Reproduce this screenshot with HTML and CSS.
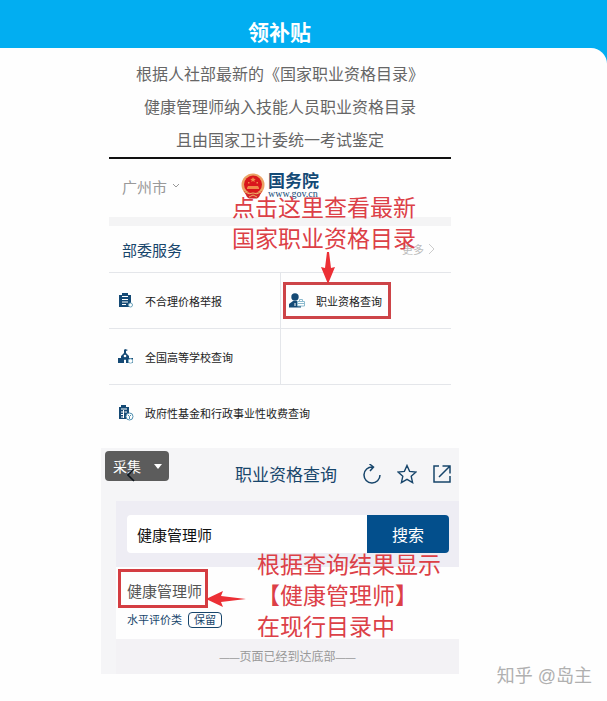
FILE: index.html
```html
<!DOCTYPE html>
<html lang="zh-CN">
<head>
    <meta charset="UTF-8">
    <meta name="viewport" content="width=device-width, initial-scale=1.0">
    <title>领补贴</title>
    <link rel="stylesheet" href="styles.css">
</head>
<body>
    <header class="banner">
        <h1>领补贴</h1>
    </header>

    <main class="panel">
        <div class="intro">
            <p>根据人社部最新的《国家职业资格目录》</p>
            <p>健康管理师纳入技能人员职业资格目录</p>
            <p>且由国家卫计委统一考试鉴定</p>
        </div>

        <!-- Service list -->
        <section class="services">
            <div class="services-top">
                <button class="city" type="button">广州市
                    <svg width="8" height="6" viewBox="0 0 8 6"><path d="M1 1l3 3 3-3" fill="none" stroke="#999" stroke-width="1"/></svg>
                </button>
                <a class="gov" href="#">
                    <svg width="24" height="26" viewBox="0 0 24 26">
                        <circle cx="12" cy="12" r="11.5" fill="#eba365"/>
                        <circle cx="12" cy="11.5" r="9" fill="#d9161c"/>
                        <path d="M12 4l.8 1.8 2 .1-1.5 1.3.5 1.9-1.8-1-1.8 1 .5-1.9L9.200 5.900l2-.1zM7 9h1.500v1.500H7zM15.500 9H17v1.500h-1.500zM6 15l1-2h10l1 2v1H6z" fill="#f08a4a"/>
                        <path d="M3 18q4 3 9 1 5 2 9-1l-3 6-2 1.500H8L6 24z" fill="#d3252a"/>
                        <path d="M4 19q4 3 8 1 4 2 8-1M8 24l4-2 4 2" fill="none" stroke="#efae64" stroke-width="1"/>
                    </svg>
                    <span class="gov-text">
                        <strong>国务院</strong>
                        <small>www.gov.cn</small>
                    </span>
                </a>
            </div>
            <div class="services-title">
                <h2>部委服务</h2>
                <a class="more" href="#">更多
                    <svg width="8" height="12" viewBox="0 0 8 12"><path d="M1 1l5 5-5 5" fill="none" stroke="#ccc"/></svg>
                </a>
            </div>
            <div class="grid">
                <a class="item" href="#">
                    <svg width="16" height="16" viewBox="0 0 16 16">
                        <path d="M1 2h3V0h6v2h3v8l-2 4H1z" fill="#154a75"/>
                        <path d="M4 3.500h6M4 6.500h6M4 9h6M4 11.500h4" stroke="#fff" stroke-width="1"/>
                        <circle cx="12.500" cy="12" r="2" fill="#fff" stroke="#6da5bd"/>
                    </svg>
                    不合理价格举报
                </a>
                <div class="cell">
                    <a class="item marked" href="#">
                        <svg width="16" height="16" viewBox="0 0 16 16">
                            <circle cx="6" cy="4" r="3.700" fill="#154a75"/>
                            <path d="M0 14.500V11l4-3h4l4 3v3.500z" fill="#154a75"/>
                            <path d="M6 10v3" stroke="#fff"/>
                            <path d="M10.500 8V6.500h3V8M8.500 8.500h7v4.500h-7zM8.500 10.500h7" fill="#fff" stroke="#8bbace"/>
                        </svg>
                        职业资格查询
                    </a>
                </div>
                <a class="item" href="#">
                    <svg width="16" height="16" viewBox="0 0 16 16">
                        <path d="M7 0l3 1-2 1v2l3 3v2h4v5H0V9h3V7l3-3V1z" fill="#154a75"/>
                        <circle cx="7" cy="7" r="1.300" fill="#fff"/>
                        <path d="M6.500 14v-3h1v3z" fill="#fff" stroke="#fff"/>
                        <circle cx="12.500" cy="12" r="2.200" fill="#fff" stroke="#8bbace"/>
                    </svg>
                    全国高等学校查询
                </a>
                <div class="cell"></div>
                <a class="item wide" href="#">
                    <svg width="16" height="16" viewBox="0 0 16 16">
                        <path d="M1 2h2V0h5v2h3v12H1z" fill="#154a75"/>
                        <path d="M3 4h6M3 7h2M6.500 7H9M3 9.500h2M3 12h3M5.500 5v8" stroke="#fff" stroke-width="1"/>
                        <circle cx="11.500" cy="11.500" r="3.500" fill="#fff" stroke="#4f8fb0"/>
                        <path d="M10 10l1.500 1.500L13 10M11.500 11.500V14" fill="none" stroke="#4f8fb0"/>
                    </svg>
                    政府性基金和行政事业性收费查询
                </a>
            </div>
            <div class="note note-top">点击这里查看最新<br>国家职业资格目录</div>
            <svg class="arrow-down" width="14" height="32" viewBox="0 0 14 32"><path d="M6 0h2l2 16 4-1-7 17-7-17 4 1z" fill="#ec2f35"/></svg>
        </section>

        <!-- Search result -->
        <section class="search">
            <div class="search-top">
                <h2>职业资格查询</h2>
                <button class="tool" type="button" aria-label="刷新">
                    <svg width="20" height="20" viewBox="0 0 20 20"><path d="M10.500 3A8 8 0 1 0 18 11M7.500 0l4 3-3.500 4" fill="none" stroke="#17456b" stroke-width="1.500"/></svg>
                </button>
                <button class="tool" type="button" aria-label="收藏">
                    <svg width="20" height="20" viewBox="0 0 20 20"><path d="M10 1.500l2.600 5.900 6.400.6-4.800 4.300 1.400 6.300L10 15.300l-5.600 3.300 1.400-6.300L1 8l6.400-.6z" fill="none" stroke="#17456b" stroke-width="1.400"/></svg>
                </button>
                <button class="tool" type="button" aria-label="分享">
                    <svg width="20" height="20" viewBox="0 0 20 20"><path d="M7 2H2v16h16v-6M10.500 2H18v7.500M18 2L7 13" fill="none" stroke="#17456b" stroke-width="1.500"/></svg>
                </button>
            </div>
            <div class="search-body">
                <form class="search-form">
                    <input type="text" value="健康管理师" aria-label="职业资格">
                    <button type="button">搜索</button>
                </form>
                <div class="result">
                    <a class="result-name" href="#">健康管理师</a>
                    <div class="result-info">水平评价类 <span class="badge">保留</span></div>
                </div>
                <p class="end"><span class="dash">——</span>页面已经到达底部<span class="dash">——</span></p>
            </div>
            <button class="collect" type="button">采集
                <svg width="8" height="5" viewBox="0 0 8 5"><path d="M0 0h8L4 5z" fill="#fff"/></svg>
            </button>
            <svg class="back" width="8" height="14" viewBox="0 0 8 14"><path d="M7 1L1 7l6 6" fill="none" stroke="#10181f" stroke-width="1.600"/></svg>
            <div class="note note-bottom">根据查询结果显示<br>【健康管理师】<br>在现行目录中</div>
            <svg class="arrow-left" width="40" height="16" viewBox="0 0 40 16"><path d="M0 8l17-8-2 5 25 3-25 3 2 5z" fill="#ec2f35"/></svg>
        </section>

        <div class="watermark">知乎 @岛主</div>
    </main>
</body>
</html>
```
FILE: styles.css
```css
* {
    box-sizing: border-box;
}
body {
    margin: 0;
    background: #02aef1;
    font-family: "Liberation Sans", "Noto Sans CJK SC", sans-serif;
    color: #222;
}
h1, h2, p {
    margin: 0;
    font-weight: normal;
}
a {
    color: inherit;
    text-decoration: none;
}
button {
    border: none;
    padding: 0;
    background: none;
    font-family: inherit;
    color: inherit;
    cursor: pointer;
}
svg {
    display: block;
    flex: none;
}
.banner {
    height: 48px;
    padding: 18px 48px 0 0;
    text-align: center;
    color: #fff;
}
.banner h1 {
    font-size: 21px;
    line-height: 30px;
    font-weight: bold;
}
.panel {
    position: relative;
    min-height: calc(100vh - 48px);
    padding: 10px 47px 28px 0;
    background: #fefefe;
    border-top-right-radius: 16px;
}
.intro {
    text-align: center;
    font-size: 16px;
    line-height: 33px;
    color: #666;
}

/* services */
.services {
    position: relative;
    max-width: 342px;
    margin: 0 auto 8px;
    border-top: 2px solid #111;
}
.services-top {
    display: grid;
    grid-template-columns: 1fr auto 1fr;
    align-items: center;
    height: 67px;
    padding: 0 13px 4px;
    border-bottom: 9px solid #f4f4f5;
}
.city {
    display: flex;
    align-items: center;
    gap: 5px;
    font-size: 15px;
    color: #999;
}
.gov {
    display: flex;
    align-items: center;
    gap: 3px;
    color: #144a76;
}
.gov-text strong,
.gov-text small {
    display: block;
}
.gov-text strong {
    font-size: 17px;
    line-height: 16px;
}
.gov-text small {
    font-family: "Liberation Serif", serif;
    font-size: 10px;
    line-height: 8px;
}
.services-title {
    display: flex;
    align-items: center;
    justify-content: space-between;
    height: 46px;
    padding: 0 15px 0 13px;
}
.services-title h2 {
    font-size: 15px;
    color: #17456b;
}
.more {
    display: flex;
    align-items: center;
    gap: 4px;
    font-size: 11px;
    color: #bbb;
}
.grid {
    display: grid;
    grid-template-columns: 1fr 1fr;
}
.item,
.cell {
    display: flex;
    align-items: center;
    height: 56px;
    border-top: 1px solid #e4e6ea;
}
.cell {
    border-left: 1px solid #e4e6ea;
}
.item {
    gap: 11px;
    padding-left: 9px;
    font-size: 11px;
}
.wide {
    grid-column: 1 / 3;
}
.marked {
    height: 37px;
    margin-left: 2px;
    padding: 0 6px 0 3px;
    border: 3px solid #cd4448;
}

/* search */
.search {
    position: relative;
    max-width: 358px;
    margin: 0 auto;
    padding-left: 15px;
    background: #f5f5f7;
}
.search-top {
    display: flex;
    align-items: center;
    justify-content: flex-end;
    gap: 15px;
    height: 53px;
    padding: 0 7px 2px 0;
}
.search-top h2 {
    margin-right: 10px;
    font-size: 17px;
    color: #17456b;
}
.search-form {
    display: flex;
    padding: 14px 10px 14px 11px;
    background: #eeedf4;
}
.search-form input {
    flex: 1;
    min-width: 0;
    height: 38px;
    padding: 0 10px;
    border: none;
    border-radius: 4px 0 0 4px;
    background: #fff;
    font-family: inherit;
    font-size: 15px;
    color: #111;
}
.search-form button {
    width: 82px;
    border-radius: 0 4px 4px 0;
    background: #034f8c;
    font-size: 16px;
    color: #fff;
}
.result {
    height: 72px;
    padding: 2px;
    background: #fefefe;
}
.result-name {
    display: inline-flex;
    align-items: center;
    height: 39px;
    padding: 4px 3px 0 6px;
    border: 3px solid #d43d42;
    font-size: 15px;
    color: #555;
    vertical-align: top;
}
.result-info {
    display: flex;
    align-items: center;
    gap: 6px;
    padding: 4px 0 0 9px;
    font-size: 11px;
    line-height: 14px;
    color: #17456b;
}
.badge {
    padding: 0 5px;
    border: 1px solid #17456b;
    border-radius: 4px;
}
.end {
    padding-top: 2px;
    background: #f3f2f5;
    text-align: center;
    font-size: 12px;
    line-height: 32px;
    color: #999;
}
.dash {
    font-size: 10px;
}

/* overlays */
.note,
.arrow-down,
.arrow-left,
.collect,
.back,
.watermark {
    position: absolute;
}
.note {
    font-size: 23px;
    line-height: 31px;
    color: #dc4047;
    white-space: nowrap;
}
.note-top {
    top: 34px;
    left: 123px;
}
.note-bottom {
    top: 102px;
    left: 156px;
}
.arrow-down {
    top: 93px;
    left: 212px;
}
.arrow-left {
    top: 143px;
    left: 105px;
}
.collect {
    top: 3px;
    left: 4px;
    display: flex;
    align-items: center;
    justify-content: space-between;
    width: 64px;
    height: 30px;
    padding: 0 7px 0 8px;
    border-radius: 4px;
    background: #5c5c5c;
    font-size: 14px;
    color: #fff;
}
.back {
    top: 20px;
    left: 26px;
}
.watermark {
    right: 15px;
    bottom: 14px;
    font-size: 18px;
    line-height: 24px;
    color: #b0b0b0;
    text-shadow: -1px -1px 0 #fff;
}
```
